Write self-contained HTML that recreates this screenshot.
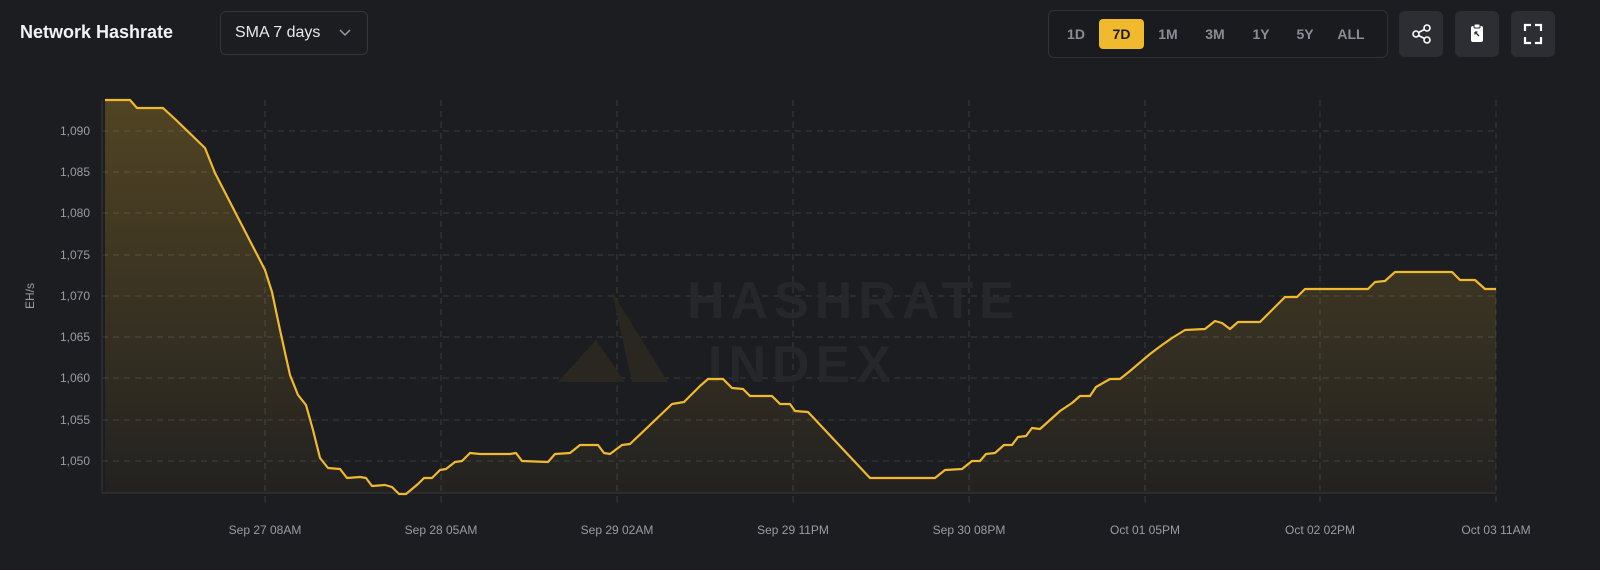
<!DOCTYPE html>
<html><head><meta charset="utf-8"><style>
body{margin:0;width:1600px;height:570px;background:#1c1d20;font-family:"Liberation Sans",sans-serif;overflow:hidden;position:relative}
.t{position:absolute;left:20px;top:22px;color:#f2f2f2;font-weight:bold;font-size:18px}
.sel{position:absolute;left:220px;top:11px;width:148px;height:44px;border:1px solid #34363b;border-radius:6px;box-sizing:border-box;color:#e8e8e8;font-size:16px;line-height:42px;padding-left:14px}
.rng{position:absolute;left:1048px;top:10px;width:340px;height:48px;border:1px solid #303237;border-radius:6px;box-sizing:border-box;background:#1a1b1e}
.rng span{position:absolute;top:8px;height:30px;line-height:30px;font-size:14px;color:#8a8d95;font-weight:bold;text-align:center}
.btn{position:absolute;top:11px;width:44px;height:46px;border-radius:6px;background:#2c2e33}
</style></head><body>
<div class="t">Network Hashrate</div>
<div class="sel">SMA 7 days<svg style="position:absolute;left:118px;top:17px" width="12" height="8" viewBox="0 0 12 8"><path d="M1 1l5 5 5-5" fill="none" stroke="#9a9ca3" stroke-width="1.5"/></svg></div>
<div class="rng">
<span style="left:12px;width:30px">1D</span>
<span style="left:50px;width:45px;background:#f0b92e;color:#1c1d20;border-radius:4px">7D</span>
<span style="left:104px;width:30px">1M</span>
<span style="left:150px;width:32px">3M</span>
<span style="left:198px;width:28px">1Y</span>
<span style="left:242px;width:28px">5Y</span>
<span style="left:284px;width:36px">ALL</span>
</div>
<div class="btn" style="left:1399px"><svg width="44" height="46" viewBox="0 0 44 46"><circle cx="28" cy="17" r="3" fill="none" stroke="#fff" stroke-width="1.6"/><circle cx="17" cy="23" r="3" fill="none" stroke="#fff" stroke-width="1.6"/><circle cx="28" cy="29" r="3" fill="none" stroke="#fff" stroke-width="1.6"/><path d="M19.5 21.5l6-3M19.5 24.5l6 3" stroke="#fff" stroke-width="1.6"/></svg></div>
<div class="btn" style="left:1455px"><svg width="44" height="46" viewBox="0 0 44 46"><rect x="16" y="15" width="12" height="16" rx="2" fill="#fff"/><rect x="19" y="13" width="6" height="4" rx="1" fill="#fff" stroke="#2c2e33"/><path d="M20 21l4 4M20 21v2.5M20 21h2.5" stroke="#2c2e33" stroke-width="1.3"/></svg></div>
<div class="btn" style="left:1511px"><svg width="44" height="46" viewBox="0 0 44 46"><path d="M14 20v-6h6M24 14h6v6M30 26v6h-6M20 32h-6v-6" fill="none" stroke="#fff" stroke-width="2.2"/></svg></div>
<svg style="position:absolute;left:0;top:0" width="1600" height="570">
<defs><linearGradient id="g" x1="0" y1="0" x2="0" y2="1"><stop offset="0" stop-color="#f0b92e" stop-opacity="0.25"/><stop offset="1" stop-color="#f0b92e" stop-opacity="0.03"/></linearGradient></defs>
<g stroke="#3a3c41" stroke-dasharray="6 5" stroke-width="1">
<path d="M102 131H1496M102 172H1496M102 213H1496M102 255H1496M102 296H1496M102 337H1496M102 378H1496M102 420H1496M102 461H1496"/>
<path d="M265 100V503M441 100V503M617 100V503M793 100V503M969 100V503M1145 100V503M1320 100V503M1496 100V503"/>
</g>
<path d="M102 100V493H1496" fill="none" stroke="#34363b"/>
<text x="1020" y="318" font-size="52" font-weight="bold" fill="#26272a" text-anchor="end" letter-spacing="6" font-family="Liberation Sans">HASHRATE</text>
<text x="708" y="382" font-size="52" font-weight="bold" fill="#26272a" letter-spacing="6" font-family="Liberation Sans">INDEX</text>
<path d="M612 292L668 382H632ZM596 340L625 382H558Z" fill="#2a2721"/>
<g font-size="12" fill="#9a9ca3" text-anchor="end"><text x="90" y="135">1,090</text><text x="90" y="176">1,085</text><text x="90" y="217">1,080</text><text x="90" y="259">1,075</text><text x="90" y="300">1,070</text><text x="90" y="341">1,065</text><text x="90" y="382">1,060</text><text x="90" y="424">1,055</text><text x="90" y="465">1,050</text></g>
<text x="34" y="296" font-size="12" fill="#9a9ca3" transform="rotate(-90 34 296)" text-anchor="middle">EH/s</text>
<g font-size="12" fill="#9a9ca3" text-anchor="middle"><text x="265" y="534">Sep 27 08AM</text><text x="441" y="534">Sep 28 05AM</text><text x="617" y="534">Sep 29 02AM</text><text x="793" y="534">Sep 29 11PM</text><text x="969" y="534">Sep 30 08PM</text><text x="1145" y="534">Oct 01 05PM</text><text x="1320" y="534">Oct 02 02PM</text><text x="1496" y="534">Oct 03 11AM</text></g>
<path id="p" d="M105 100L130 100L137 108L163 108L175 119L205 148L215 173L265 270L272 292L280 330L290 375L298 395L306 405L313 430L320 458L328 468L340 469L347 478L360 477L366 478L372 486L385 485L392 487L399 494L406 494L418 484L424 478L432 478L440 470L446 469L455 462L462 461L470 453L480 454L510 454L516 453L522 461L548 462L555 454L570 453L580 445L598 445L604 453L610 454L622 445L630 444L672 404L684 402L700 386L708 379L723 379L732 388L743 389L750 396L772 396L780 404L790 404L795 411L808 412L870 478L935 478L945 470L962 469L972 461L980 461L986 454L995 453L1004 445L1012 445L1018 437L1026 436L1032 428L1040 429L1050 420L1060 411L1072 403L1080 396L1090 396L1096 387L1110 379L1120 379L1130 371L1150 354L1162 345L1172 338L1185 330L1205 329L1215 321L1222 323L1230 329L1238 322L1260 322L1285 297L1297 297L1305 289L1368 289L1375 282L1385 281L1395 272L1452 272L1460 280L1475 280L1485 289L1496 289" fill="none" stroke="#f0b92e" stroke-width="2.2" stroke-linejoin="round"/>
<path d="M105 100L130 100L137 108L163 108L175 119L205 148L215 173L265 270L272 292L280 330L290 375L298 395L306 405L313 430L320 458L328 468L340 469L347 478L360 477L366 478L372 486L385 485L392 487L399 494L406 494L418 484L424 478L432 478L440 470L446 469L455 462L462 461L470 453L480 454L510 454L516 453L522 461L548 462L555 454L570 453L580 445L598 445L604 453L610 454L622 445L630 444L672 404L684 402L700 386L708 379L723 379L732 388L743 389L750 396L772 396L780 404L790 404L795 411L808 412L870 478L935 478L945 470L962 469L972 461L980 461L986 454L995 453L1004 445L1012 445L1018 437L1026 436L1032 428L1040 429L1050 420L1060 411L1072 403L1080 396L1090 396L1096 387L1110 379L1120 379L1130 371L1150 354L1162 345L1172 338L1185 330L1205 329L1215 321L1222 323L1230 329L1238 322L1260 322L1285 297L1297 297L1305 289L1368 289L1375 282L1385 281L1395 272L1452 272L1460 280L1475 280L1485 289L1496 289V493H105Z" fill="url(#g)"/>
</svg>
</body></html>
